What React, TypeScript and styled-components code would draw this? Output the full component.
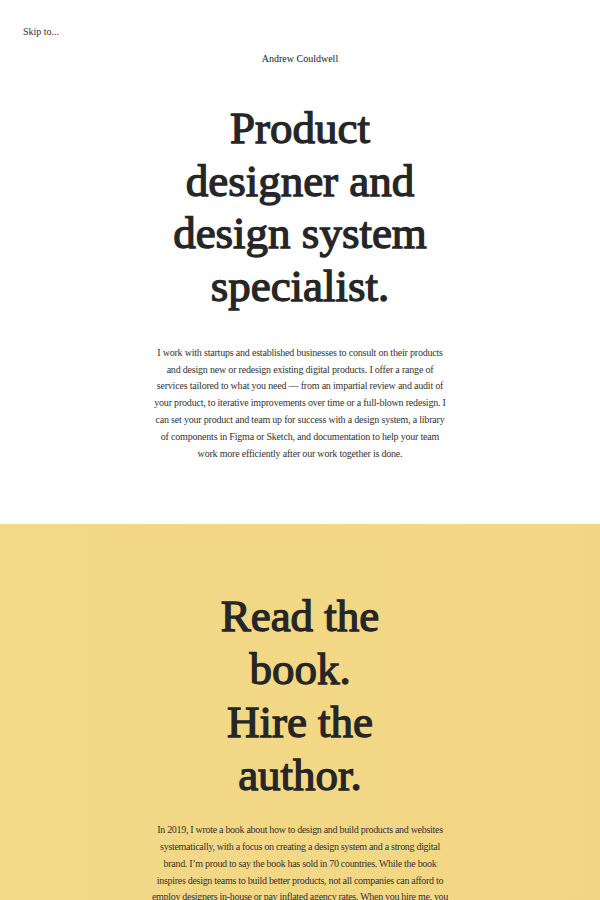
import styled, { createGlobalStyle } from "styled-components";

const Global = createGlobalStyle`
  html, body {
    margin: 0;
    padding: 0;
    background: #ffffff;
  }
  body {
    font-family: "Liberation Serif", "DejaVu Serif", serif;
    color: #262626;
    -webkit-font-smoothing: antialiased;
  }
`;

const Header = styled.header`
  position: relative;
  padding: 53px 0 0;
  text-align: center;
`;

const Skip = styled.a`
  position: absolute;
  left: 23px;
  top: 26px;
  font-size: 10px;
  color: #333;
  text-decoration: none;
`;

const Name = styled.div`
  font-size: 10px;
  color: #222;
`;

const Section = styled.section<{ $yellow?: boolean }>`
  display: flex;
  flex-direction: column;
  align-items: center;
  padding: ${(p) => (p.$yellow ? "66px 20px 40px" : "38px 20px 62px")};
  background: ${(p) =>
    p.$yellow ? "linear-gradient(90deg, #f2d987 0%, #f3d684 100%)" : "#fff"};
`;

const Title = styled.h1<{ $width: number }>`
  margin: 0;
  max-width: ${(p) => p.$width}px;
  font-size: 45px;
  line-height: 52.7px;
  font-weight: 400;
  -webkit-text-stroke: 1.3px #262626;
  text-align: center;
  color: #262626;
  letter-spacing: 0px;
`;

const Text = styled.p<{ $gap: number; $width: number; $tight?: boolean }>`
  margin: ${(p) => p.$gap}px 0 0;
  max-width: ${(p) => p.$width}px;
  font-size: 10px;
  line-height: 16.8px;
  letter-spacing: ${(p) => (p.$tight ? "-0.3px" : "-0.2px")};
  text-align: center;
  color: #333;
`;

export default function App() {
  return (
    <>
      <Global />
      <Header>
        <Skip href="#">Skip to...</Skip>
        <Name>Andrew Couldwell</Name>
      </Header>
      <Section>
        <Title $width={270}>Product designer and design system specialist.</Title>
        <Text $gap={32} $width={292}>
          I work with startups and established businesses to consult on their
          products and design new or redesign existing digital products. I offer
          a range of services tailored to what you need — from an impartial
          review and audit of your product, to iterative improvements over time
          or a full-blown redesign. I can set your product and team up for
          success with a design system, a library of components in Figma or
          Sketch, and documentation to help your team work more efficiently
          after our work together is done.
        </Text>
      </Section>
      <Section $yellow>
        <Title $width={190}>Read the book. Hire the author.</Title>
        <Text $gap={21} $width={300} $tight>
          In 2019, I wrote a book about how to design and build products and
          websites systematically, with a focus on creating a design system and
          a strong digital brand. I’m proud to say the book has sold in 70
          countries. While the book inspires design teams to build better
          products, not all companies can afford to employ designers in-house or
          pay inflated agency rates. When you hire me, you get the author of the
          book working directly on your product.
        </Text>
      </Section>
    </>
  );
}
